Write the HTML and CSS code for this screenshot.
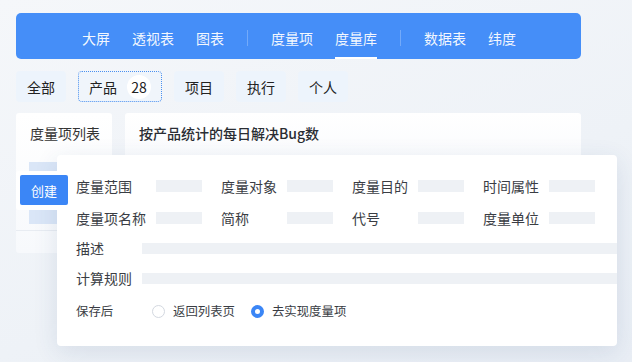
FILE: index.html
```html
<!DOCTYPE html>
<html lang="zh-CN">
<head>
  <meta charset="UTF-8" />
  <title>度量库</title>
  <link rel="stylesheet" href="styles.css">
</head>
<body>
  <div class="page">
    <nav class="navbar">
      <a class="nav-item">大屏</a>
      <a class="nav-item">透视表</a>
      <a class="nav-item">图表</a>
      <span class="nav-sep"></span>
      <a class="nav-item">度量项</a>
      <a class="nav-item active">度量库</a>
      <span class="nav-sep"></span>
      <a class="nav-item">数据表</a>
      <a class="nav-item">纬度</a>
    </nav>

    <div class="tabs">
      <div class="tab">全部</div>
      <div class="tab focused">产品 <span class="count">28</span></div>
      <div class="tab">项目</div>
      <div class="tab">执行</div>
      <div class="tab">个人</div>
    </div>

    <div class="content">
      <div class="panel side">
        <div class="panel-title">度量项列表</div>
        <div class="side-item"></div>
        <div class="side-item second"></div>
        <div class="side-foot"></div>
      </div>
      <div class="panel main">
        <div class="panel-title strong">按产品统计的每日解决Bug数</div>
      </div>
    </div>
  </div>

  <div class="dialog">
    <div class="form-row">
      <span class="label first">度量范围</span><span class="field"></span>
      <span class="label">度量对象</span><span class="field"></span>
      <span class="label">度量目的</span><span class="field"></span>
      <span class="label">时间属性</span><span class="field"></span>
    </div>
    <div class="form-row">
      <span class="label first">度量项名称</span><span class="field"></span>
      <span class="label">简称</span><span class="field"></span>
      <span class="label">代号</span><span class="field"></span>
      <span class="label">度量单位</span><span class="field"></span>
    </div>
    <div class="form-row">
      <span class="label">描述</span><span class="field wide"></span>
    </div>
    <div class="form-row">
      <span class="label">计算规则</span><span class="field wide"></span>
    </div>
    <div class="form-row small">
      <span class="label save">保存后</span>
      <span class="radio"></span><span class="radio-text">返回列表页</span>
      <span class="radio checked"></span><span class="radio-text">去实现度量项</span>
    </div>
  </div>

  <!-- create popup, sits over the dialog edge -->
  <div class="create-wrap"><button class="create-btn">创建</button></div>
</body>
</html>
```

FILE: styles.css
```css
body {
  margin: 0;
  width: 632px;
  height: 362px;
  overflow: hidden;
  position: relative;
  font-family: "Noto Sans CJK SC", "Noto Sans", sans-serif;
  background: linear-gradient(160deg, #f5f7fa 0%, #eef2f7 60%, #e9eef5 100%);
  color: #333;
}

.page {
  padding: 13px 51px 0 16px;
}

.navbar {
  display: flex;
  align-items: stretch;
  gap: 22px;
  height: 46px;
  padding-left: 66px;
  background-color: #458ef8;
  border-radius: 5px;
}

.nav-item {
  display: flex;
  align-items: center;
  padding-top: 4px;
  font-size: 14px;
  color: rgba(255, 255, 255, 0.95);
  box-sizing: border-box;
}

.nav-item.active {
  box-shadow: inset 0 -2px 0 #fff;
}

.nav-sep {
  width: 1px;
  height: 16px;
  align-self: center;
  margin: 4px 1px 0;
  background: rgba(255, 255, 255, 0.25);
}

.tabs {
  display: flex;
  gap: 12px;
  margin-top: 12px;
}

.tab {
  display: flex;
  align-items: center;
  height: 31px;
  padding: 0 11px;
  background: #edf4fc;
  border-radius: 4px;
  font-size: 14px;
  color: #222;
}

.tab.focused {
  height: 29px;
  padding: 0 10px;
  border: 1px dotted #4a90f0;
  background: #f0f5fb;
}

.count {
  display: inline-flex;
  align-items: center;
  justify-content: center;
  width: 24px;
  height: 24px;
  margin-left: 10px;
  border-radius: 50%;
  background: #fff;
}

.content {
  display: flex;
  gap: 13px;
  margin-top: 11px;
}

.panel {
  background: linear-gradient(180deg, #fff 0%, #f7f9fc 100%);
  border-radius: 3px;
}

.panel.side {
  width: 96px;
  height: 140px;
}

.panel.main {
  flex: 1;
  height: 70px;
}

.panel-title {
  height: 40px;
  line-height: 40px;
  padding-left: 14px;
  font-size: 14px;
  color: #333;
}

.panel-title.strong {
  font-weight: 500;
  color: #2a2d33;
}

.side-item {
  height: 24px;
  margin: 9px 0 0 13px;
  background: #dae6f7;
}

.side-item.second {
  margin-top: 14px;
}

.side-foot {
  margin-top: 6px;
  border-top: 1px solid #e8ecf2;
}

.create-wrap {
  position: absolute;
  z-index: 2;
  left: 16px;
  top: 171px;
  width: 52px;
  padding: 4px 0 5px 4px;
  box-sizing: border-box;
  background: #fff;
  border-radius: 3px 0 0 3px;
}

.create-btn {
  display: block;
  width: 48px;
  height: 30px;
  border: 0;
  border-radius: 2px;
  background: #3b86f6;
  color: #fff;
  font-family: inherit;
  font-size: 13px;
  text-align: center;
  padding: 0;
}

.dialog {
  position: absolute;
  z-index: 1;
  left: 57px;
  top: 155px;
  width: 560px;
  height: 191px;
  padding: 16px 0 0 19px;
  box-sizing: border-box;
  background: #fff;
  border-radius: 4px;
  box-shadow: 0 6px 24px rgba(40, 70, 120, 0.12);
}

.form-row {
  display: flex;
  align-items: center;
  height: 30px;
}

.form-row:nth-child(2) {
  margin-top: 2px;
}

.form-row.small {
  margin-top: 3px;
  font-size: 12.4px;
}

.label {
  width: 66px;
  flex-shrink: 0;
  font-size: 14px;
  color: #3a3d44;
}

.label.first {
  width: 80px;
}

.field {
  width: 46px;
  height: 12px;
  margin-right: 19px;
  background: #eef1f5;
}

.field.wide {
  flex: 1;
  height: 11px;
  margin-right: 0;
}

.label.save {
  width: 76px;
  font-size: 12.4px;
}

.radio {
  width: 13px;
  height: 13px;
  box-sizing: border-box;
  border: 1px solid #d3d8e0;
  border-radius: 50%;
  margin-right: 8px;
}

.radio.checked {
  border: 4px solid #3b86f6;
}

.radio-text {
  color: #3a3d44;
  margin-right: 16px;
}
```
